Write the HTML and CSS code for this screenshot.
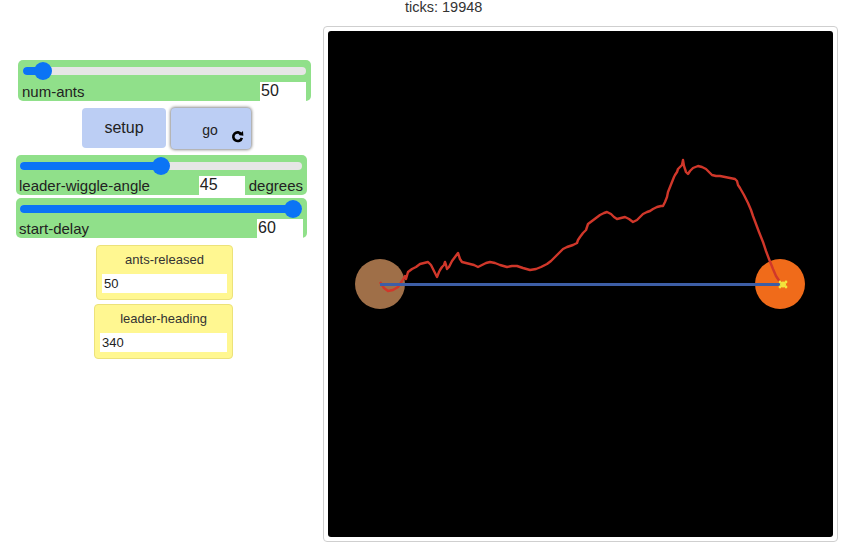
FILE: index.html
```html
<!DOCTYPE html>
<html>
<head>
<meta charset="utf-8">
<title>Ants</title>
<link rel="stylesheet" href="styles.css">
</head>
<body>
<div class="page">
  <div class="panel">
    <div class="slider s-ants">
      <div class="track-row">
        <div class="track" style="--p:0.042"><div class="fill"></div><div class="thumb"></div></div>
      </div>
      <div class="info-row">
        <span class="label">num-ants</span>
        <span class="value">50</span>
      </div>
    </div>
    <div class="buttons">
      <div class="btn setup">setup</div>
      <div class="btn go">
        <span class="go-text">go</span>
        <svg class="forever" width="13" height="13" viewBox="0 0 12 12"><path d="M9.6 4.2A4 4 0 1 0 10 7.2" fill="none" stroke="#000" stroke-width="2.4"/><path d="M7 4.6L11.4 5.3L11.1 0.9Z" fill="#000"/></svg>
      </div>
    </div>
    <div class="slider s-wiggle">
      <div class="track-row">
        <div class="track" style="--p:0.5"><div class="fill"></div><div class="thumb"></div></div>
      </div>
      <div class="info-row">
        <span class="label">leader-wiggle-angle</span>
        <span class="value">45</span>
        <span class="units">degrees</span>
      </div>
    </div>
    <div class="slider s-delay">
      <div class="track-row">
        <div class="track" style="--p:1"><div class="fill"></div><div class="thumb"></div></div>
      </div>
      <div class="info-row">
        <span class="label">start-delay</span>
        <span class="value">60</span>
      </div>
    </div>
    <div class="monitor m-released">
      <div class="m-label">ants-released</div>
      <div class="m-value">50</div>
    </div>
    <div class="monitor m-heading">
      <div class="m-label">leader-heading</div>
      <div class="m-value">340</div>
    </div>
  </div>
  <div class="view-col">
    <div class="ticks">ticks: 19948</div>
    <div class="frame">
      <svg class="world" width="505" height="506" viewBox="328 32 505 506">
        <rect x="328" y="32" width="505" height="506" fill="#000"/>
        <circle cx="380" cy="285" r="25" fill="#9f6f48"/>
        <circle cx="780" cy="285" r="25" fill="#f06b1a"/>
        <polyline fill="none" stroke="#d0372a" stroke-width="2.4" stroke-linejoin="round"
          points="380,283 384,289 388,292 393,291 398,288 402,282 405,277 406,280 408,273 412,270 416,268 420,265 424,264 428,263 431,266 433,270 436,276 437,278 439,273 440,271 442,268 444,266 445,263 446,266 447,270 449,268 452,262 455,258 458,254 460,260 462,263 466,264 470,265 474,266 478,268 482,266 486,264 490,263 495,264 500,266 507,268 512,267 517,267 523,269 530,271 536,270 541,268 547,265 551,262 555,258 557,256 560,253 563,250 567,248 570,247 573,246 577,244 578,241 580,238 583,234 586,231 587,228 588,225 592,222 596,219 600,216 604,214 607,213 611,215 614,218 617,220 621,219 625,218 629,220 633,223 637,221 640,218 643,215 647,213 650,212 653,210 657,208 661,207 663,207 665,203 667,198 668,193 670,188 672,183 674,178 675,176 677,173 678,170 680,168 682,166 683,161 684,167 685,170 686,173 688,175 690,172 693,169 698,167 702,168 706,170 709,173 712,176 716,177 720,177 725,178 730,179 735,180 737,182 738,186 740,189 744,196 748,204 751,211 753,217 756,225 759,233 763,243 766,252 769,260 773,270 776,277 780,283 783,285"/>
        <line x1="380" y1="285.5" x2="783" y2="285.5" stroke="#3d5ea6" stroke-width="3"/>
        <g fill="#f2e33c">
          <circle cx="783" cy="285.5" r="3"/>
          <circle cx="780" cy="283" r="1.4"/>
          <circle cx="786" cy="283" r="1.4"/>
          <circle cx="780" cy="288" r="1.4"/>
          <circle cx="786" cy="288" r="1.4"/>
        </g>
      </svg>
    </div>
  </div>
</div>
</body>
</html>
```
FILE: styles.css
```css
* { box-sizing: border-box; }
body {
  margin: 0;
  background: #fff;
  font-family: "Liberation Sans", Arial, sans-serif;
  color: #222;
}
.page {
  display: flex;
  align-items: flex-start;
}
.panel {
  width: 323px;
  flex: none;
  padding-top: 60px;
  display: flex;
  flex-direction: column;
  align-items: flex-start;
}

/* sliders */
.slider {
  background: #90e08a;
  border-radius: 5px;
  display: flex;
  flex-direction: column;
}
.s-ants { margin-left: 18px; width: 293px; height: 41px; }
.s-wiggle { margin-left: 16px; width: 291px; height: 40px; margin-top: 6px; }
.s-delay { margin-left: 16px; width: 291px; height: 40px; margin-top: 3px; }
.track-row {
  height: 22px;
  display: flex;
  align-items: center;
  padding: 0 5px 0 5px;
}
.s-wiggle .track-row, .s-delay .track-row { height: 23px; padding: 0 5px 0 4px; }
.track {
  position: relative;
  flex: 1;
  height: 8px;
  border-radius: 4px;
  background: #e6e6e6;
}
.fill {
  position: absolute;
  left: 0;
  top: 0;
  bottom: 0;
  width: calc(9px + (100% - 18px) * var(--p));
  background: #0b74f5;
  border-radius: 4px;
}
.thumb {
  position: absolute;
  top: 50%;
  left: calc(9px + (100% - 18px) * var(--p));
  width: 18px;
  height: 18px;
  margin: -9px 0 0 -9px;
  border-radius: 50%;
  background: #0b74f5;
}
.info-row {
  flex: 1;
  display: flex;
  align-items: stretch;
  padding: 0 5px 0 4px;
}
.s-wiggle .info-row, .s-delay .info-row { padding: 0 4px 0 3px; }
.label {
  flex: 1;
  font-size: 15px;
  line-height: 18px;
  padding-top: 1px;
}
.value {
  background: #fff;
  width: 46px;
  font-size: 16px;
  line-height: 18px;
  padding-left: 1px;
}
.units {
  font-size: 15px;
  line-height: 18px;
  padding-top: 1px;
  margin-left: 4px;
}

/* buttons */
.buttons {
  display: flex;
  gap: 5px;
  margin-top: 7px;
  margin-left: 82px;
}
.btn {
  background: #bccef4;
  border-radius: 4px;
  display: flex;
  align-items: center;
  justify-content: center;
}
.setup {
  width: 84px;
  height: 40px;
  font-size: 16px;
  color: #222;
}
.go {
  position: relative;
  width: 80px;
  height: 41px;
  font-size: 14px;
  box-shadow: 0 0 3px 1px rgba(0, 0, 0, 0.45);
}
.go-text { margin-left: -2px; margin-top: 2px; }
.forever {
  position: absolute;
  right: 7px;
  bottom: 6px;
}

/* monitors */
.monitor {
  background: #fff791;
  border: 1px solid #ece27a;
  border-radius: 4px;
  display: flex;
  flex-direction: column;
  align-items: stretch;
}
.m-released { margin-left: 96px; width: 137px; height: 55px; margin-top: 7px; padding: 0 5px; }
.m-heading { margin-left: 94px; width: 139px; height: 55px; margin-top: 4px; padding: 0 5px; }
.m-label {
  text-align: center;
  font-size: 13px;
  line-height: 15px;
  padding-top: 6px;
  height: 28px;
  color: #333;
}
.m-value {
  background: #fff;
  height: 19px;
  font-size: 13px;
  line-height: 19px;
  padding-left: 2px;
  color: #222;
}

/* view */
.view-col {
  display: flex;
  flex-direction: column;
  align-items: flex-start;
}
.ticks {
  height: 26px;
  margin-left: 82px;
  font-size: 14.5px;
  line-height: 15px;
  color: #333;
}
.frame {
  border: 1px solid #cfcfcf;
  border-radius: 4px;
  padding: 4px;
  width: 515px;
  height: 516px;
}
.world {
  display: block;
  border-radius: 3px;
}
```
